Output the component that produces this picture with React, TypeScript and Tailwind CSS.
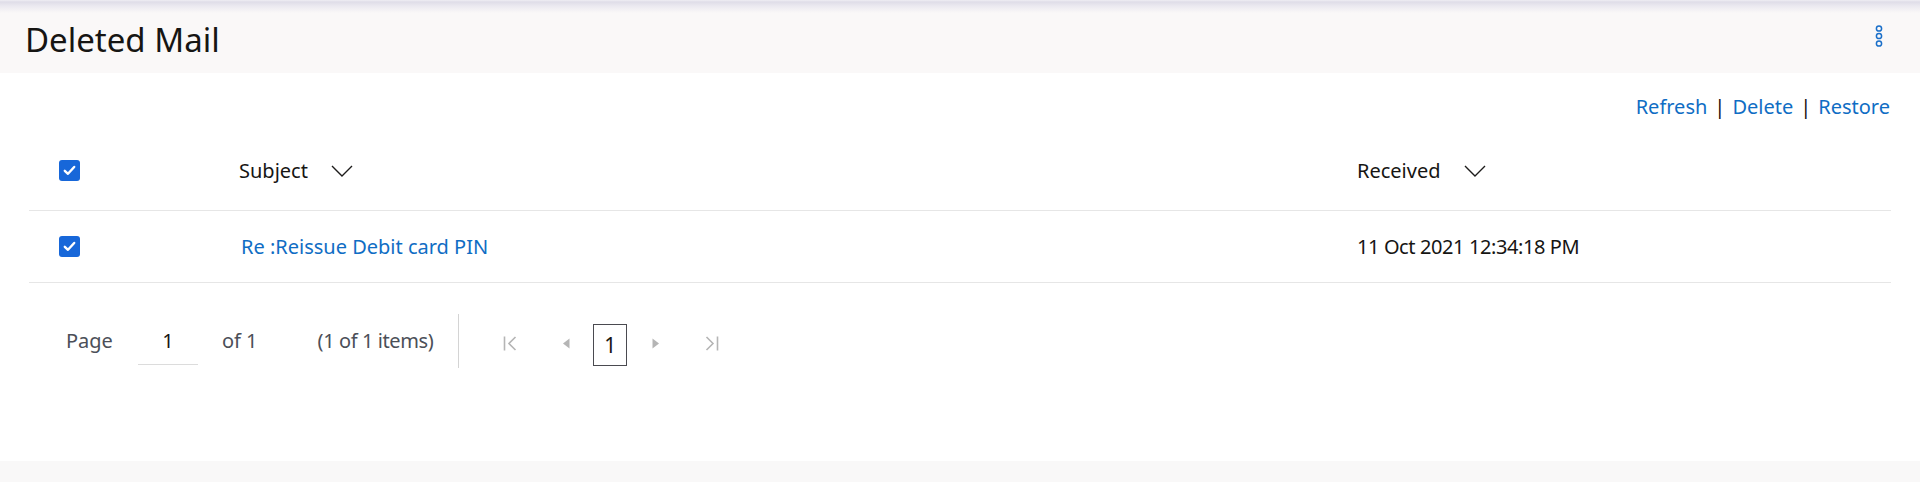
import React from 'react';

const font = { fontFamily: '"Noto Sans", "Open Sans", Arial, sans-serif' };

const CheckBox: React.FC = () => (
  <div className="w-[21px] h-[21px] rounded-[3px] bg-[#1767d9] flex items-center justify-center">
    <svg width="13" height="11" viewBox="0 0 13 11" fill="none">
      <path d="M1.8 5.8 L5 8.8 L11.2 2" stroke="white" strokeWidth="2.4" strokeLinecap="round" strokeLinejoin="round" />
    </svg>
  </div>
);

const SortChevron: React.FC = () => (
  <svg width="22" height="12" viewBox="0 0 22 12" fill="none" className="ml-[23px]">
    <path d="M1 1 L11 11 L21 1" stroke="#1d1c1b" strokeWidth="1.4" />
  </svg>
);

const MoreDots: React.FC = () => (
  <svg width="8" height="22" viewBox="0 0 8 22" fill="none">
    <circle cx="4" cy="3.5" r="2.6" stroke="#1a6fc9" strokeWidth="1.5" />
    <circle cx="4" cy="11" r="2.6" stroke="#1a6fc9" strokeWidth="1.5" />
    <circle cx="4" cy="18.5" r="2.6" stroke="#1a6fc9" strokeWidth="1.5" />
  </svg>
);

export default function App() {
  return (
    <div style={font} className="h-[482px] flex flex-col bg-white text-[#161513]">
      {/* Header */}
      <div className="h-[73px] flex items-start justify-between pl-[25px] pr-[37px] bg-[linear-gradient(to_bottom,#efeef3_0px,#dfdde8_2px,#ebe9f0_6px,#faf8f8_13px)]">
        <h1 className="mt-[17px] text-[33px] leading-[45px] font-normal text-[#161513]">Deleted Mail</h1>
        <button className="mt-[25px]" aria-label="More">
          <MoreDots />
        </button>
      </div>

      {/* Actions */}
      <div className="flex justify-end pr-[30px] pt-[20px] mb-[10px] text-[20px] leading-[28px]">
        <a className="text-[#0f6dc4]">Refresh</a>
        <span className="mx-[7px]">|</span>
        <a className="text-[#0f6dc4]">Delete</a>
        <span className="mx-[7px]">|</span>
        <a className="text-[#0f6dc4]">Restore</a>
      </div>

      {/* Table */}
      <div className="mx-[29px] text-[20px] leading-[28px]">
        <div className="grid grid-cols-[210px_1118px_1fr] items-center h-[80px] border-b border-[#e6e6e6]">
          <div className="pl-[30px]">
            <CheckBox />
          </div>
          <div className="flex items-center">
            <span>Subject</span>
            <SortChevron />
          </div>
          <div className="flex items-center">
            <span>Received</span>
            <SortChevron />
          </div>
        </div>
        <div className="grid grid-cols-[210px_1118px_1fr] items-center h-[72px] border-b border-[#e6e6e6]">
          <div className="pl-[30px]">
            <CheckBox />
          </div>
          <div className="pl-[2px]">
            <a className="text-[#0f6dc4]">Re :Reissue Debit card PIN</a>
          </div>
          <div className="tracking-[-0.4px]">11 Oct 2021 12:34:18 PM</div>
        </div>
      </div>

      {/* Pagination */}
      <div className="mt-[31px] ml-[66px] flex items-center h-[54px] text-[20px] leading-[28px] text-[#4b4f58]">
        <span>Page</span>
        <div className="ml-[25px] w-[60px] h-[48px] flex items-center justify-center border-b border-[#dcdcdc] text-[#161513]">1</div>
        <span className="ml-[24px]">of 1</span>
        <span className="ml-[60px] tracking-[-0.4px]">(1 of 1 items)</span>
        <div className="ml-[25px] w-px h-[54px] bg-[#d4d4d4]" />
        <svg width="14" height="15" viewBox="0 0 14 15" fill="none" className="ml-[44px] mt-[4px]">
          <path d="M1.5 0.5 V14.5" stroke="#b5b5b5" strokeWidth="1.6" />
          <path d="M12.5 1 L6 7.5 L12.5 14" stroke="#b5b5b5" strokeWidth="1.6" />
        </svg>
        <svg width="8" height="11" viewBox="0 0 8 11" className="ml-[45px] mt-[4px]">
          <path d="M7.5 0.5 L1 5.5 L7.5 10.5 Z" fill="#b5b5b5" />
        </svg>
        <div className="ml-[23px] self-start mt-[10px] w-[34px] h-[42px] border border-[#4a4a50] flex items-center justify-center text-[21px] text-[#161513]">
          1
        </div>
        <svg width="8" height="11" viewBox="0 0 8 11" className="ml-[25px] mt-[4px]">
          <path d="M0.5 0.5 L7 5.5 L0.5 10.5 Z" fill="#b5b5b5" />
        </svg>
        <svg width="14" height="15" viewBox="0 0 14 15" fill="none" className="ml-[45px] mt-[4px]">
          <path d="M1.5 1 L8 7.5 L1.5 14" stroke="#b5b5b5" strokeWidth="1.6" />
          <path d="M12.5 0.5 V14.5" stroke="#b5b5b5" strokeWidth="1.6" />
        </svg>
      </div>

      {/* Footer band */}
      <div className="mt-auto h-[21px] bg-[#f9f8f8]" />
    </div>
  );
}
